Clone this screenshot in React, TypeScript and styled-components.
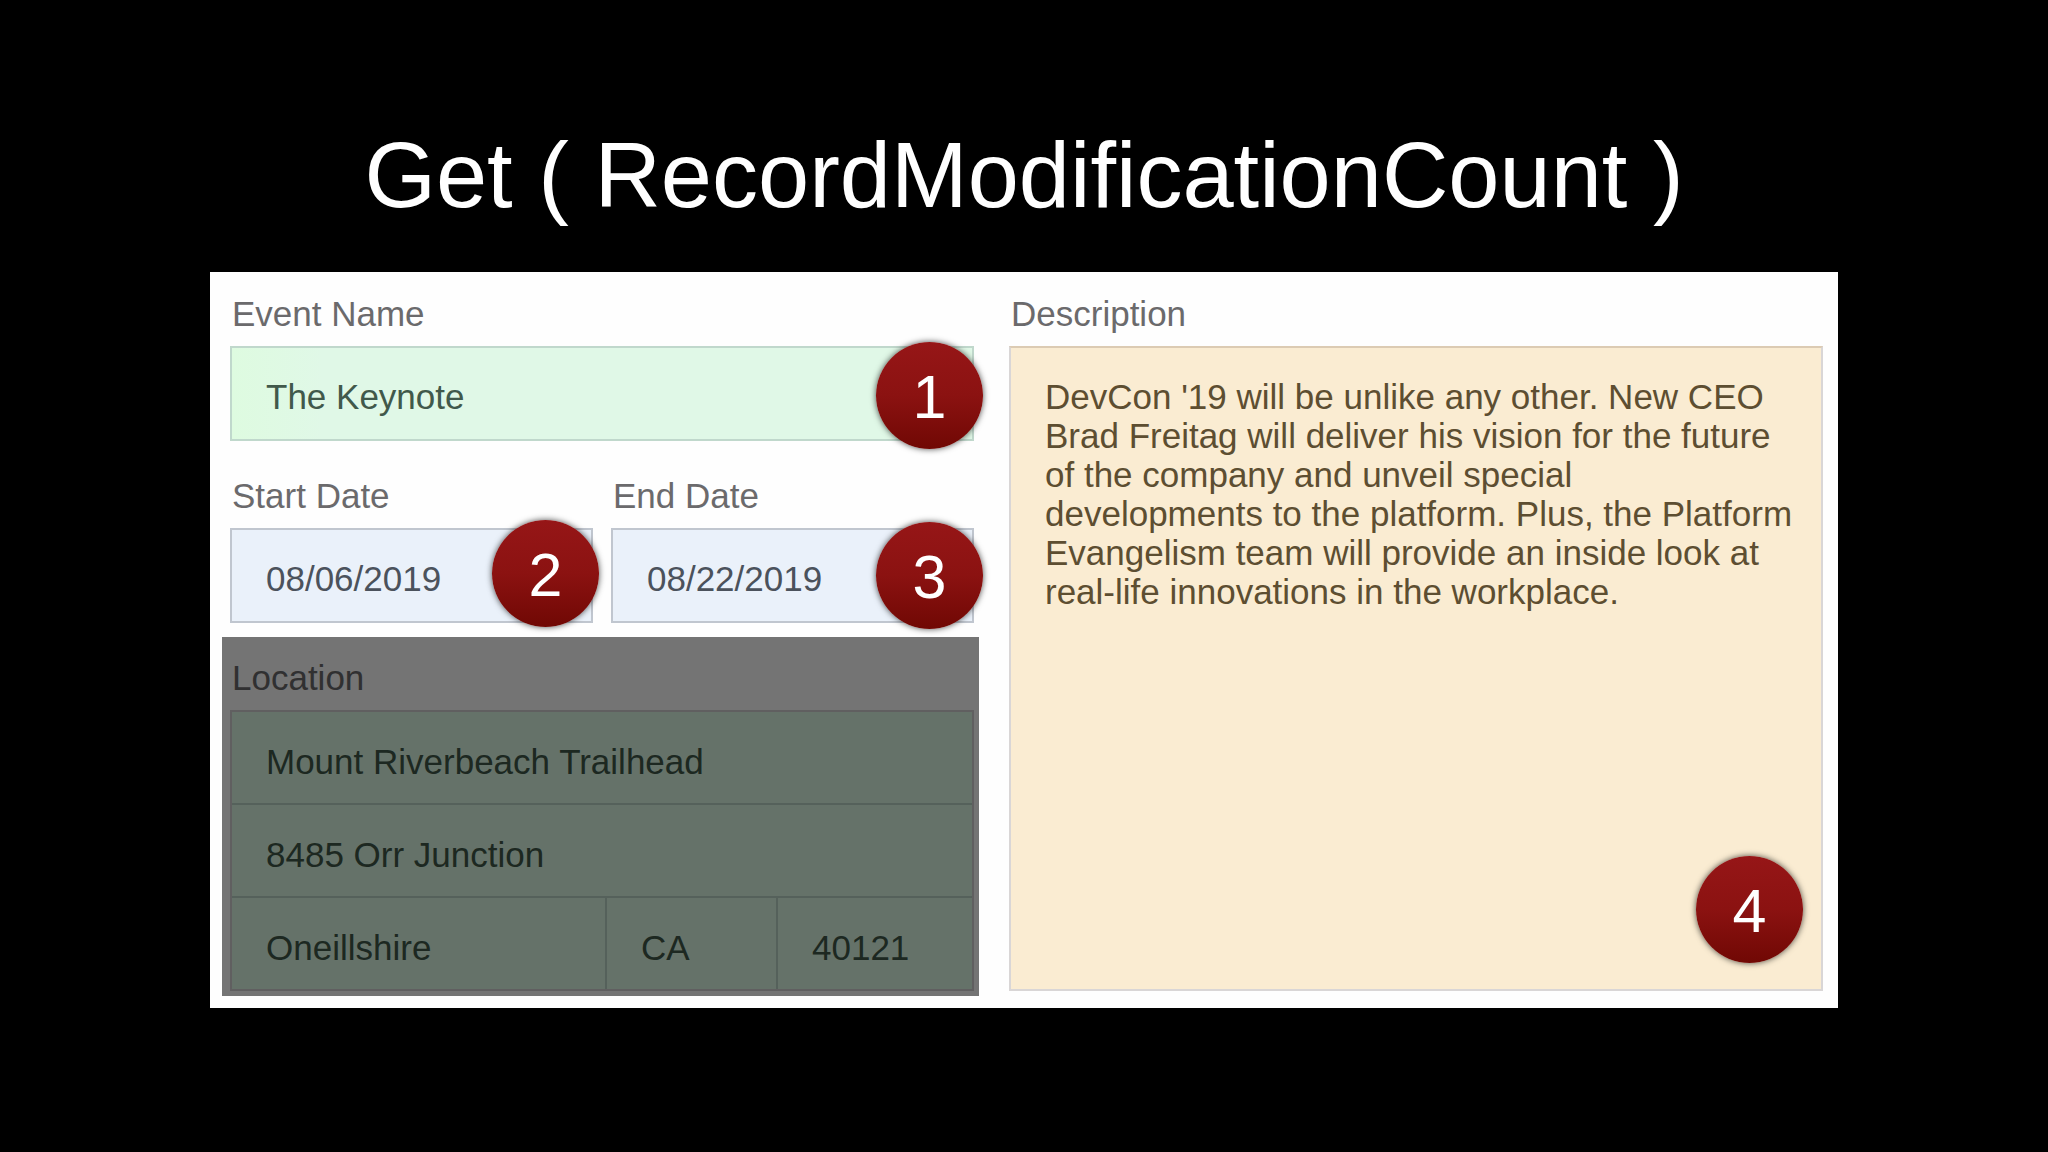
import React from "react";
import styled, { createGlobalStyle } from "styled-components";

const GlobalStyle = createGlobalStyle`
  *, *::before, *::after { box-sizing: border-box; }
  body {
    margin: 0;
    background: #000;
    font-family: "Liberation Sans", Arial, sans-serif;
  }
`;

const Slide = styled.main`
  min-height: 100vh;
  padding: 0 210px 144px;
  background: #000;
`;

const Title = styled.h1`
  margin: 0;
  padding: 123px 0 45px;
  color: #fff;
  font-size: 92px;
  font-weight: 400;
  line-height: 104px;
  text-align: center;
  white-space: nowrap;
`;

const Card = styled.form`
  display: grid;
  grid-template-columns: 744fr 814fr;
  column-gap: 35px;
  padding: 1px 15px 12px 20px;
  background: #fefefe;
`;

const Column = styled.div`
  display: flex;
  flex-direction: column;
  gap: 14px;
  min-width: 0;
`;

const DateRow = styled.div`
  display: grid;
  grid-template-columns: 1fr 1fr;
  gap: 18px;
`;

const Field = styled.div<{ $grow?: boolean }>`
  display: flex;
  flex-direction: column;
  flex: ${(p) => (p.$grow ? "1" : "none")};
  min-width: 0;
  margin-bottom: ${(p) => (p.$grow ? "5px" : "0")};
`;

const labelText = `
  display: block;
  padding: 21px 0 13px 2px;
  color: #6b6a6c;
  font-size: 35px;
  line-height: 39px;
`;

const Label = styled.label`
  ${labelText}
`;

const GroupLabel = styled.div`
  ${labelText}
`;

const Control = styled.div<{ $grow?: boolean }>`
  position: relative;
  display: flex;
  flex: ${(p) => (p.$grow ? "1" : "none")};
`;

const tones = {
  green: { fill: "linear-gradient(90deg, #defbe0, #e0f8e7 90px)", line: "#c0d8cc", text: "#41594b" },
  blue: { fill: "#eaf1fa", line: "#c0c6cf", text: "#4b525c" },
};

const TextInput = styled.input<{ $tone: keyof typeof tones }>`
  width: 100%;
  min-width: 0;
  height: 95px;
  padding: 6px 34px 0;
  border: 2px solid ${(p) => tones[p.$tone].line};
  border-radius: 0;
  outline: none;
  background: ${(p) => tones[p.$tone].fill};
  color: ${(p) => tones[p.$tone].text};
  font: 35px "Liberation Sans", Arial, sans-serif;
`;

const TextArea = styled.textarea`
  display: block;
  width: 100%;
  padding: 29px 22px 29px 34px;
  border: 2px solid #d9d6d6;
  border-top-color: #dccbb3;
  border-radius: 0;
  outline: none;
  resize: none;
  background: #faecd2;
  color: #5d4e31;
  font: 35px/39px "Liberation Sans", Arial, sans-serif;
`;

const Badge = styled.span<{ $top?: number; $right: number; $bottom?: number }>`
  position: absolute;
  top: ${(p) => (p.$top === undefined ? "auto" : `${p.$top}px`)};
  right: ${(p) => p.$right}px;
  bottom: ${(p) => (p.$bottom === undefined ? "auto" : `${p.$bottom}px`)};
  display: flex;
  align-items: center;
  justify-content: center;
  width: 107px;
  height: 107px;
  padding-top: 3px;
  border-radius: 50%;
  background: linear-gradient(#961617, #8b1211 50%, #700804);
  box-shadow: 0 0 6px rgba(0, 0, 0, 0.7);
  color: #fff;
  font-size: 61px;
  line-height: 70px;
`;

const LocationGroup = styled.section`
  position: relative;
  margin: 0 -5px 0 -8px;
  padding: 0 5px 5px 8px;

  &::after {
    content: "";
    position: absolute;
    inset: 0;
    background: rgba(0, 0, 0, 0.545);
    pointer-events: none;
  }
`;

const AddressGrid = styled.div`
  display: grid;
  grid-template-columns: 375fr 171fr 194fr;
  grid-template-rows: 93px 93px 91px;
  border: 2px solid #d4d2d4;
`;

const AddressInput = styled.input<{ $wide?: boolean; $divided?: boolean; $last?: boolean }>`
  grid-column: ${(p) => (p.$wide ? "1 / -1" : "auto")};
  width: 100%;
  min-width: 0;
  padding: 8px 34px 0;
  border: 0 solid #bcd6c8;
  border-right-width: ${(p) => (p.$divided ? "2px" : "0")};
  border-bottom-width: ${(p) => (p.$last ? "0" : "2px")};
  border-radius: 0;
  outline: none;
  background: #dffae6;
  color: #40594a;
  font: 35px "Liberation Sans", Arial, sans-serif;
`;

const description =
  "DevCon '19 will be unlike any other. New CEO Brad Freitag will deliver his vision for the future of the company and unveil special developments to the platform. Plus, the Platform Evangelism team will provide an inside look at real-life innovations in the workplace.";

export default function App() {
  return (
    <>
      <GlobalStyle />
      <Slide>
        <Title>Get ( RecordModificationCount )</Title>
        <Card>
          <Column>
            <Field>
              <Label htmlFor="event-name">Event Name</Label>
              <Control>
                <TextInput id="event-name" $tone="green" defaultValue="The Keynote" />
                <Badge $top={-4} $right={-9}>1</Badge>
              </Control>
            </Field>
            <DateRow>
              <Field>
                <Label htmlFor="start-date">Start Date</Label>
                <Control>
                  <TextInput id="start-date" $tone="blue" defaultValue="08/06/2019" />
                  <Badge $top={-8} $right={-6}>2</Badge>
                </Control>
              </Field>
              <Field>
                <Label htmlFor="end-date">End Date</Label>
                <Control>
                  <TextInput id="end-date" $tone="blue" defaultValue="08/22/2019" />
                  <Badge $top={-6} $right={-9}>3</Badge>
                </Control>
              </Field>
            </DateRow>
            <LocationGroup aria-labelledby="location">
              <GroupLabel id="location">Location</GroupLabel>
              <AddressGrid>
                <AddressInput $wide aria-label="Venue" defaultValue="Mount Riverbeach Trailhead" />
                <AddressInput $wide aria-label="Street" defaultValue="8485 Orr Junction" />
                <AddressInput $divided $last aria-label="City" defaultValue="Oneillshire" />
                <AddressInput $divided $last aria-label="State" defaultValue="CA" />
                <AddressInput $last aria-label="Postal code" defaultValue="40121" />
              </AddressGrid>
            </LocationGroup>
          </Column>
          <Field $grow>
            <Label htmlFor="description">Description</Label>
            <Control $grow>
              <TextArea id="description" spellCheck={false} defaultValue={description} />
              <Badge $right={20} $bottom={28}>4</Badge>
            </Control>
          </Field>
        </Card>
      </Slide>
    </>
  );
}
